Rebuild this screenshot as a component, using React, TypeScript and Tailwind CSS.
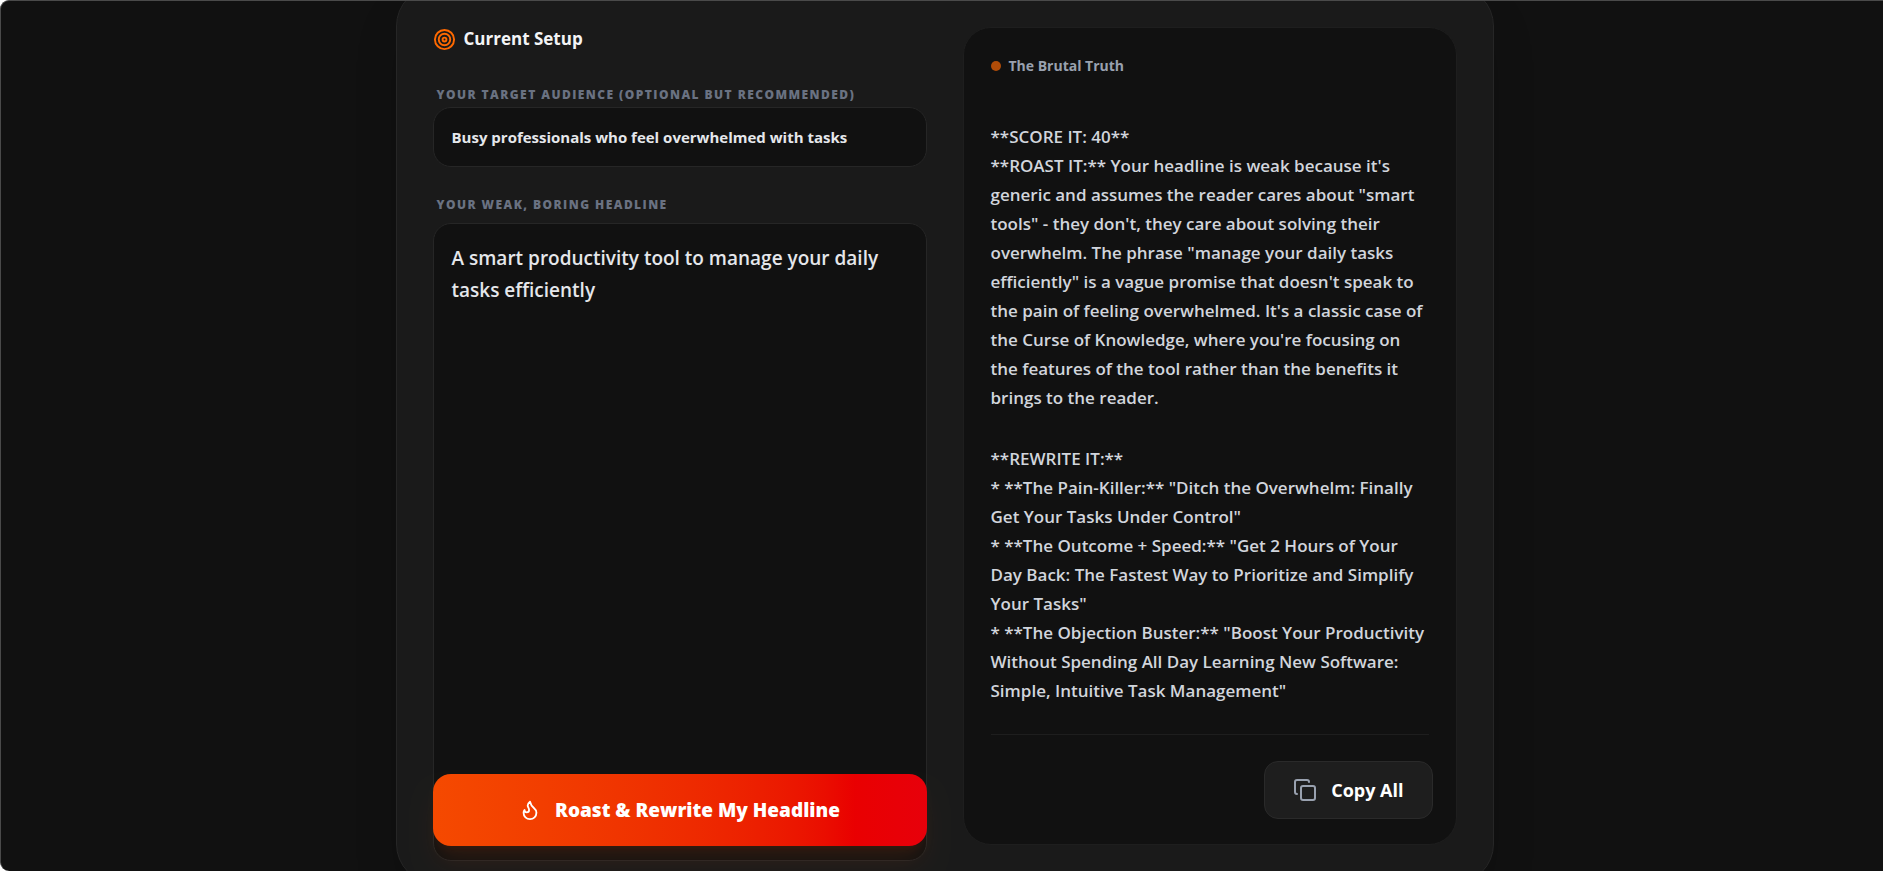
import { useState } from 'react';
import { Copy, Flame, Target } from 'lucide-react';

const ROAST = `**SCORE IT: 40**
**ROAST IT:** Your headline is weak because it's generic and assumes the reader cares about "smart tools" - they don't, they care about solving their overwhelm. The phrase "manage your daily tasks efficiently" is a vague promise that doesn't speak to the pain of feeling overwhelmed. It's a classic case of the Curse of Knowledge, where you're focusing on the features of the tool rather than the benefits it brings to the reader.`;

const REWRITE = `**REWRITE IT:**
* **The Pain-Killer:** "Ditch the Overwhelm: Finally Get Your Tasks Under Control"
* **The Outcome + Speed:** "Get 2 Hours of Your Day Back: The Fastest Way to Prioritize and Simplify Your Tasks"
* **The Objection Buster:** "Boost Your Productivity Without Spending All Day Learning New Software: Simple, Intuitive Task Management"`;

function SetupForm() {
  const [audience, setAudience] = useState('Busy professionals who feel overwhelmed with tasks');
  const [headline, setHeadline] = useState(
    'A smart productivity tool to manage your daily tasks efficiently',
  );

  return (
    <form className="-mb-4 flex flex-col" onSubmit={(e) => e.preventDefault()}>
      <h2 className="flex items-center gap-2 text-[17px] leading-6 font-bold text-gray-100">
        <Target size={23} className="text-[#ff6900]" aria-hidden="true" />
        Current Setup
      </h2>

      <label
        htmlFor="audience"
        className="mt-9 mb-1 px-1 text-[12px] leading-4 font-extrabold tracking-[0.12em] text-gray-500 uppercase"
      >
        Your target audience (optional but recommended)
      </label>
      <input
        id="audience"
        type="text"
        value={audience}
        onChange={(e) => setAudience(e.target.value)}
        className="h-15 rounded-[18px] border border-[#262626] bg-[#111111] px-[18px] text-[15px] font-bold text-gray-200 outline-none"
      />

      <label
        htmlFor="headline"
        className="mt-7 mb-2 px-1 text-[12px] leading-5 font-extrabold tracking-[0.12em] text-gray-500 uppercase"
      >
        Your weak, boring headline
      </label>
      <div className="relative flex flex-1">
        <textarea
          id="headline"
          value={headline}
          onChange={(e) => setHeadline(e.target.value)}
          className="w-full resize-none rounded-[18px] border border-[#262626] bg-[#111111] px-[18px] py-[18px] text-[19px] leading-8 font-semibold text-gray-200 outline-none"
        />
        <button
          type="submit"
          className="absolute inset-x-0 bottom-[15px] flex h-18 items-center justify-center gap-3.5 rounded-[18px] bg-linear-to-r from-orange-600 to-red-600 text-[19px] font-extrabold text-white shadow-xl shadow-orange-600/10"
        >
          <Flame size={22} aria-hidden="true" />
          Roast &amp; Rewrite My Headline
        </button>
      </div>
    </form>
  );
}

function ResultPanel() {
  return (
    <section className="flex flex-col rounded-[28px] border border-[#1e1e1e] bg-[#111111] px-[27px] pt-[26px] pb-[25px]">
      <h2 className="flex items-center gap-2 text-[14px] leading-6 font-bold text-gray-400">
        <span className="size-[10px] rounded-full bg-[#b04c08]" />
        The Brutal Truth
      </h2>

      <div className="mt-11 flex flex-col gap-8 text-[17px] leading-[29px] font-semibold whitespace-pre-line text-gray-300">
        <p>{ROAST}</p>
        <p>{REWRITE}</p>
      </div>

      <div className="mt-auto border-t border-[#1e1e1e] pt-[26px]">
        <button
          type="button"
          onClick={() => navigator.clipboard?.writeText(`${ROAST}\n\n${REWRITE}`)}
          className="-mr-1 ml-auto flex h-[58px] items-center gap-3.5 rounded-[14px] border border-[#2a2a2a] bg-[#1e1e1e] px-7 text-[18px] font-bold text-white"
        >
          <Copy size={24} className="text-gray-400" aria-hidden="true" />
          Copy All
        </button>
      </div>
    </section>
  );
}

export default function App() {
  return (
    <div className="h-screen bg-white font-['Open_Sans','Noto_Sans',sans-serif]">
      <main className="flex h-full items-start justify-center overflow-hidden rounded-l-[9px] border-t border-l border-[#4a4a4a] bg-[#111111] pl-[5px]">
        <div className="-mt-[15px] grid min-h-[calc(100%+28px)] w-full max-w-[1098px] grid-cols-2 gap-9 rounded-[40px] border border-[#262626] bg-[#1a1a1a] px-9 pt-10 pb-[38px] shadow-2xl">
          <SetupForm />
          <ResultPanel />
        </div>
      </main>
    </div>
  );
}
